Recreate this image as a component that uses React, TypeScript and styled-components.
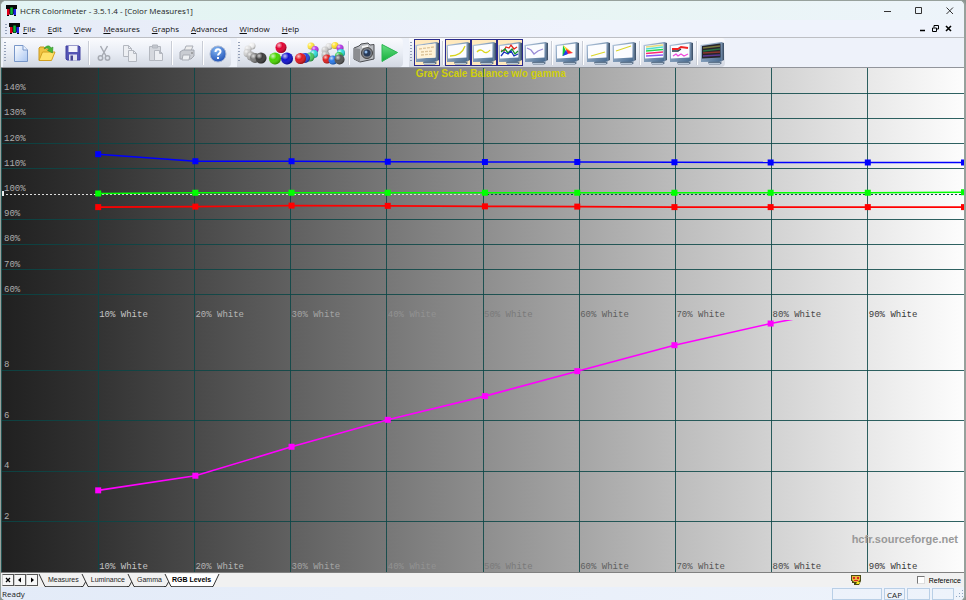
import React from "react";
import styled, { createGlobalStyle } from "styled-components";

const UI = `"Open Sans", "Noto Sans", sans-serif`;
const SANS = `"Liberation Sans", Arial, sans-serif`;
const MONO = `"Liberation Mono", "Courier New", monospace`;

const Global = createGlobalStyle`
  * { box-sizing: border-box; }
  body { margin: 0; background: #8b958f; }
  button { font: inherit; color: inherit; background: none; border: 0; padding: 0; }
`;

const Window = styled.div`
  height: 100vh;
  display: flex;
  flex-direction: column;
  font: 8px ${UI};
  color: #1c1c1c;
  background: #eff3fb;
  border: solid #97a19c;
  border-width: 1px 2px 0 1px;
  border-radius: 6px 6px 5px 5px;
  overflow: hidden;
`;
const TitleBar = styled.header`
  display: flex;
  align-items: center;
  justify-content: space-between;
  height: 19px;
  flex: none;
  padding: 0 9px 0 5px;
  background: linear-gradient(90deg, #e3f4f4, #e6f5f2 50%, #edf4fa);
`;
const Title = styled.h1`
  display: flex;
  align-items: center;
  gap: 3px;
  margin: 0;
  font: 8px ${UI};
  color: #222;
`;
const WindowButtons = styled.div<{ $gap: number }>`
  display: flex;
  gap: ${(p) => p.$gap}px;
  button { width: 10px; height: 12px; display: grid; place-items: center; }
`;
const MenuRow = styled.div`
  display: flex;
  align-items: center;
  height: 18px;
  flex: none;
  padding: 0 11px 0 3px;
  background: linear-gradient(90deg, #e6ebf7, #eff3fc 60%);
  border-bottom: 1px solid #bdbfc4;
`;
const Menu = styled.nav`
  display: flex;
  flex: 1;
  margin-left: 3px;
`;
const MenuItem = styled.button`
  padding: 0 7px 0 0;
  margin-right: 5px;
  line-height: 14px;
  color: #111;
`;
const Toolbars = styled.div`
  display: flex;
  gap: 6px;
  height: 30px;
  flex: none;
  padding-left: 2px;
  background: #eef2fa;
  border-bottom: 1px solid #92959b;
`;
const ToolGroup = styled.div`
  display: flex;
  align-items: center;
  background: linear-gradient(#fafbfe, #e9edf5 50%, #d3d8e2);
  border-radius: 0 4px 4px 0;
`;
const Grip = styled.span<{ $h: number }>`
  width: 2px;
  height: ${(p) => p.$h}px;
  margin: 0 2px 0 1px;
  background: repeating-linear-gradient(#94a0b8 0 1px, transparent 1px 3px);
`;
const Tool = styled.button`
  width: 26px;
  height: 27px;
  display: grid;
  place-items: center;
  border: 1px solid transparent;
  svg { width: 26px; height: 26px; margin: -1px; }
  &[aria-pressed="true"] { background: #ffe9bd; border-color: #29298c; }
`;
const Separator = styled.span`
  width: 1px;
  height: 24px;
  margin: 0 2px;
  background: #c9cdd6;
  box-shadow: 1px 0 #fff;
`;
const Charts = styled.main`
  flex: 1;
  min-height: 0;
  display: flex;
  flex-direction: column;
  border-left: 1px solid #245454;
  background: linear-gradient(90deg, #202020, #333 10%, #494949 20%, #606060 30%, #777 40%, #8e8e8e 50%, #a5a5a5 60%, #bcbcbc 70%, #d2d2d2 80%, #e8e8e8 90%, #fdfdfd);
`;
const Plot = styled.svg`
  display: block;
  width: 100%;
  flex: 1 1 0;
  min-height: 0;
  overflow: hidden;
`;
const Label = styled.text`
  font: 9px ${MONO};
`;
const Heading = styled.text`
  font: bold 10px ${SANS};
  fill: #cfcf0c;
`;
const Site = styled.text`
  font: bold 11px ${SANS};
  fill: #999;
`;
const SheetRow = styled.div`
  display: flex;
  align-items: center;
  height: 15px;
  flex: none;
  padding-left: 1px;
  background: #f1f1f1;
  border-top: 1px solid #808080;
  font: 7px ${SANS};
`;
const SheetNav = styled.button`
  width: 12px;
  height: 12px;
  display: grid;
  place-items: center;
  background: #f7f7f7;
  border: 1px solid #555;
  border-left-color: #ccc;
`;
const Tabs = styled.div`
  display: flex;
  flex: 1;
  height: 13px;
`;
const Edge = styled.svg`
  width: 8px;
  height: 13px;
  flex: none;
`;
const Tab = styled.button`
  padding: 0 2px;
  line-height: 12px;
  border-bottom: 1px solid #555;
  font: 7px ${SANS};
  &[aria-selected="true"] { background: #fff; font-weight: bold; padding: 0 1px 0 0; color: #000; }
`;
const RobotButton = styled.button`
  width: 12px;
  height: 12px;
  margin-right: 55px;
`;
const Reference = styled.label`
  display: flex;
  align-items: center;
  gap: 4px;
  margin-right: 3px;
  color: #000;
  input {
    appearance: none;
    width: 8px;
    height: 8px;
    margin: 0;
    background: #fff;
    border: 1px solid;
    border-color: #777 #ddd #ddd #777;
  }
`;
const StatusBar = styled.footer`
  display: flex;
  align-items: center;
  gap: 2px;
  height: 13px;
  flex: none;
  background: linear-gradient(90deg, #e3ebf8, #eef3fb);
  padding: 0 1px;
`;
const Ready = styled.span`
  flex: 1;
`;
const Pane = styled.span<{ $w: number }>`
  width: ${(p) => p.$w}px;
  height: 12px;
  line-height: 11px;
  text-align: center;
  border: 1px solid #b9cfe6;
`;

const Logo = () => (
  <svg width="11" height="11" viewBox="0 0 11 11" aria-hidden="true">
    <path d="M0 0H11V4H10V11H8V9H7V10H4V9H3V11H1V4H0Z" fill="#080808" />
    <rect x="1" y="4" width="2.500" height="6" fill="#e00018" />
    <rect x="4.300" y="2.500" width="2.500" height="7" fill="#08b838" />
    <rect x="7.500" y="4" width="2.500" height="6" fill="#2020e0" />
  </svg>
);

const Defs = () => (
  <svg width="0" height="0" aria-hidden="true">
    <defs>
      <linearGradient id="page" x1="0" y1="0" x2="1" y2="1"><stop stopColor="#fff" /><stop offset="1" stopColor="#a9c6f2" /></linearGradient>
      <linearGradient id="bezel" x1="0" y1="0" x2="1" y2="1"><stop stopColor="#b9cbe0" /><stop offset="1" stopColor="#46698f" /></linearGradient>
      <linearGradient id="side" x1="0" y1="0" x2="1" y2="0"><stop stopColor="#8299b4" /><stop offset="1" stopColor="#33475f" /></linearGradient>
      <radialGradient id="help" cx=".4" cy=".25" r=".8"><stop stopColor="#84b8f4" /><stop offset="1" stopColor="#1d4eb4" /></radialGradient>
      <linearGradient id="play" x1="0" y1="0" x2="0" y2="1"><stop stopColor="#66df83" /><stop offset="1" stopColor="#13ad3a" /></linearGradient>
      <radialGradient id="shine" cx=".33" cy=".3" r=".7"><stop stopColor="#fff" stopOpacity=".75" /><stop offset=".45" stopColor="#fff" stopOpacity="0" /><stop offset="1" stopColor="#000" stopOpacity=".3" /></radialGradient>
    </defs>
  </svg>
);

const I = ({ children }: { children: React.ReactNode }) => (
  <svg viewBox="0 0 26 26" aria-hidden="true">{children}</svg>
);
type BallSpec = [number, number, number, string];
const Balls = ({ items }: { items: BallSpec[] }) => (
  <I>
    {items.map(([x, y, r, c], i) => (
      <g key={i}><circle cx={x} cy={y} r={r} fill={c} /><circle cx={x} cy={y} r={r} fill="url(#shine)" /></g>
    ))}
  </I>
);
const Monitor = ({ children, dark }: { children: React.ReactNode; dark?: boolean }) => (
  <I>
    <path d="M9 22L12 20H19L23 23L21 24.500H10Z" fill="#60758c" />
    <path d="M10 23.500H21" stroke="#b7c7d8" />
    <path d="M22 2L25 3V20L22 21.500Z" fill="url(#side)" />
    <path d="M1.500 5L22.500 2V21.500L2 22Z" fill="url(#bezel)" />
    <path d="M3 6L21.500 3.500V17.500L3 18.500Z" fill={dark ? "#26242b" : "#fbfcff"} />
    <g fill="none" strokeWidth="1.300">{children}</g>
  </I>
);
const Sheet = ({ x, y, w = 9, h = 12, c }: { x: number; y: number; w?: number; h?: number; c: string }) => (
  <path d={`M${x} ${y}h${w - 3}l3 3v${h - 3}h-${w}Z M${x + w - 3} ${y}v3h3`} fill="#edeff3" stroke={c} />
);
const G = "#b4b8c0";

const icons: Record<string, React.ReactNode> = {
  New: <I><path d="M6.500 5.500H15L19.500 10V21.500H6.500Z" fill="url(#page)" stroke="#7897c9" /><path d="M15 5.500V10H19.500" fill="#e9f1ff" stroke="#7897c9" /></I>,
  Open: <I><path d="M5 20V8L6 7H10L12 9H18V12" fill="#f0c341" stroke="#c99820" /><path d="M5 20.500L8.500 12H21L17.500 20.500Z" fill="#ffe16a" stroke="#d2a020" /><path d="M10 9C12 5 16 5 17 8L19 7L18.500 13L13.500 10.500L15 9.500C14 7.500 12 7.500 10 9Z" fill="#4bb838" stroke="#2c8a2a" strokeWidth=".5" /></I>,
  Save: <I><path d="M6 6H19L20 7V20H7L6 19Z" fill="#5454b4" stroke="#4040a0" /><path d="M8.500 6H17.500V12H8.500Z" fill="#f4f5fb" /><path d="M9 14.500H17V20.500H9Z" fill="#e2e4f0" /><path d="M10.500 15.500H13V20.500H10.500Z" fill="#454594" /></I>,
  Cut: <I><g fill="none" stroke="#a7abb3" strokeWidth="1.500"><path d="M9.500 6L15 16M16.500 6L11 16" /><circle cx="9.500" cy="18" r="2.200" /><circle cx="16.500" cy="18" r="2.200" /></g></I>,
  Copy: <I><Sheet x={6.5} y={5.5} w={8} h={11} c={G} /><Sheet x={11.5} y={10.5} w={8} h={11} c={G} /></I>,
  Paste: <I><path d="M6.500 6.500H17.500V20.500H6.500Z" fill="#d5d8de" stroke={G} /><path d="M9.500 5H14.500V8H9.500Z" fill="#c2c6cd" stroke={G} /><Sheet x={11.5} y={10.5} w={8} h={10} c={G} /></I>,
  Print: <I><path d="M10 11L12 6H19L17 11Z" fill="#eee" stroke="#aaaeb6" /><path d="M6 12L9 10H20V16L17 19H6Z" fill="#c9ccd2" stroke="#a2a6af" /><path d="M9 15H16L15 20H8Z" fill="#eef0f3" stroke="#a9adb5" /><path d="M17 13H19" stroke="#777" /></I>,
  Help: <I><circle cx="13" cy="14" r="8" fill="url(#help)" stroke="#aab8d2" /><path d="M10.500 12C10.500 8.500 15.500 8.500 15.500 11.500C15.500 13.500 13 13.200 13 15.500M13 17V19" fill="none" stroke="#fff" strokeWidth="2" /></I>,
  "Gray scale": <Balls items={[[10, 6, 3.5, "#f0f0f0"], [6, 9, 3.5, "#e0e0e0"], [5.500, 13, 4, "#d0d0d0"], [9, 16, 4.5, "#b0b0b0"], [13, 18, 5, "#7c7c7c"], [19, 18, 5.5, "#3c3c3c"]]} />,
  Primaries: <Balls items={[[13, 7.5, 5.5, "#e00030"], [7, 18.5, 6, "#48d400"], [19, 18.5, 6, "#1010cc"]]} />,
  "Saturation scale": <Balls items={[[17, 6, 3.5, "#ffe640"], [21, 9.5, 3.5, "#b838ec"], [20, 14, 4, "#30d8d8"], [16, 17, 4.5, "#48c860"], [11, 18, 5, "#2448e0"], [6.5, 18.5, 5.5, "#df1720"]]} />,
  "All colours": <Balls items={[[9, 6.5, 3.500, "#ddd"], [15, 5.5, 3.500, "#ffe030"], [20, 8, 3.500, "#b43ae6"], [21, 13, 4, "#2edada"], [5, 10, 3.500, "#ccc"], [5.5, 15, 4, "#bbb"], [19, 16, 4, "#30c850"], [7, 19, 4.5, "#df2020"], [13, 20, 4.5, "#2878e8"], [19.5, 19.5, 5, "#555"]]} />,
  Capture: <I><path d="M3 8L8 6L10 4L17 3L19 5L23 4.500V19L9 22L3 19Z" fill="#b8bbc0" stroke="#4c4e52" /><path d="M3 8L9 9V22L3 19Z" fill="#8b8d91" /><circle cx="16" cy="13" r="5.500" fill="#7d8087" stroke="#444" /><circle cx="16" cy="13" r="3.500" fill="#273a58" /><circle cx="15" cy="12" r="1.500" fill="#8fb8e8" /><path d="M11 6L17 5V7L11 8Z" fill="#f5f5f5" /></I>,
  Run: <I><path d="M5 4.500L20.500 12.500L5 21.500Z" fill="url(#play)" stroke="#2cb652" /></I>,
  Measures: <Monitor><path d="M3 6L21.500 3.500V17.500L3 18.500Z" fill="#fff3d8" /><path d="M5 9L20 7M7 12L19 11M7 15L19 14" stroke="#dec59b" strokeDasharray="3 1" /></Monitor>,
  Luminance: <Monitor><path d="M5 16C13 16 18 12 20 6" stroke="#d8d51c" /></Monitor>,
  Gamma: <Monitor><path d="M6 12C9 8 12 11 13 12S17 13 19 10" stroke="#dcd71c" /></Monitor>,
  "RGB levels": <Monitor><path d="M4 10L7 11L9 7L12 8L14 5L17 9L20 7" stroke="#e4281c" /><path d="M4 12L8 9L11 13L15 9L18 14L21 11" stroke="#12952c" /><path d="M4 16L7 12L11 14L14 11L17 16L21 14" stroke="#1732bd" /></Monitor>,
  "Near black": <Monitor><path d="M4 8L8 10L11 14L15 11L20 9" stroke="#9a8cd6" /></Monitor>,
  "CIE diagram": <Monitor><path d="M9 5L8.500 16L13 14L11 9Z" fill="#11c83a" /><path d="M9 5L19 13L12 10Z" fill="#ffd51c" /><path d="M12 9L19 13L13 14Z" fill="#ff2432" /><path d="M8.500 16L12 10L14 14Z" fill="#2638ef" /></Monitor>,
  "Low luminance": <Monitor><path d="M6 16L20 12" stroke="#dbd62a" /></Monitor>,
  "High luminance": <Monitor><path d="M5 11L20 6" stroke="#dbd62a" /></Monitor>,
  "Saturation luminance": <Monitor><path d="M4 7L21 5" stroke="#e8dc7c" /><path d="M4 9L21 7" stroke="#50dfd2" /><path d="M4 11L21 9.500" stroke="#27d949" /><path d="M4 13.500L21 12" stroke="#ff2970" /><path d="M4 16L21 15" stroke="#8c58f3" /></Monitor>,
  "Saturation shift": <Monitor><path d="M4 9L10 9L13 7L20 8" stroke="#f12424" strokeWidth="2" /><path d="M4 11H10L13 9" stroke="#203a45" /><path d="M5 16L8 14L10 16L13 14L16 16L20 14" stroke="#f048dc" /></Monitor>,
  "Free measures": <Monitor dark><path d="M4 8L21 6" stroke="#77773c" /><path d="M4 11L21 9" stroke="#247344" /><path d="M4 13L21 12" stroke="#8c352b" /><path d="M4 16L21 15" stroke="#5b3b95" /></Monitor>,
};

const groups: { grip: string; items: string[] }[] = [
  { grip: "File", items: ["New", "Open", "Save", "|", "Cut", "Copy", "Paste", "|", "Print", "|", "Help"] },
  { grip: "Measure", items: ["Gray scale", "Primaries", "Saturation scale", "All colours", "|", "Capture", "Run"] },
  { grip: "View", items: ["Measures", "|", "Luminance", "Gamma", "RGB levels", "Near black", "|", "CIE diagram", "|", "Low luminance", "High luminance", "|", "Saturation luminance", "Saturation shift", "|", "Free measures"] },
];
const pressed = ["Measures", "Luminance", "Gamma", "RGB levels"];
const disabled = ["Cut", "Copy", "Paste", "Print"];
const menus = ["File", "Edit", "View", "Measures", "Graphs", "Advanced", "Window", "Help"];
const tabs = ["Measures", "Luminance", "Gamma", "RGB Levels"];

const steps = [10, 20, 30, 40, 50, 60, 70, 80, 90];
const labelColors = ["#c4c4c4", "#b4b4b4", "#a4a4a4", "#929292", "#7a7a7a", "#606060", "#585858", "#484848", "#383838"];
const levels = [10, 20.1, 30.1, 40.1, 50.2, 59.8, 69.9, 79.9, 90, 100];

const series = [
  { color: "#0000ff", values: [115.8, 113, 113, 112.8, 112.7, 112.7, 112.6, 112.5, 112.5, 112.5] },
  { color: "#ff0000", values: [94.8, 95, 95.4, 95.3, 95.1, 95, 94.8, 94.8, 94.8, 94.8] },
  { color: "#00ff00", values: [100.2, 100.5, 100.5, 100.5, 100.5, 100.5, 100.5, 100.5, 100.5, 100.7] },
];
const gamma = [3.24, 3.82, 4.97, 6.04, 6.98, 7.97, 9, 9.86, 10.6, 11.3];

const Series = ({ color, values, min, max }: { color: string; values: number[]; min: number; max: number }) => {
  const y = (v: number) => `${((max - v) / (max - min)) * 100}%`;
  return (
    <g>
      {values.slice(1).map((v, i) => (
        <line key={i} x1={`${levels[i]}%`} y1={y(values[i])} x2={`${levels[i + 1]}%`} y2={y(v)} stroke={color} strokeWidth="1.600" />
      ))}
      {values.map((v, i) => (
        <rect key={i} x={`${levels[i]}%`} y={y(v)} width="6" height="6" transform="translate(-3 -3)" fill={color} />
      ))}
    </g>
  );
};

const Grid = ({ rows, min, max, unit }: { rows: number[]; min: number; max: number; unit: string }) => (
  <g>
    {rows.map((r) => {
      const y = `${((max - r) / (max - min)) * 100}%`;
      return (
        <g key={r}>
          {r !== 100 && <line x1="0" x2="100%" y1={y} y2={y} stroke="#0b4747" strokeOpacity=".85" shapeRendering="crispEdges" />}
          <Label x="2" y={y} dy="-3" fill="#acacac">{r}{unit}</Label>
        </g>
      );
    })}
    {steps.map((s, i) => (
      <g key={s}>
        <line x1={`${s}%`} x2={`${s}%`} y1="0" y2="100%" stroke="#0b4747" strokeOpacity=".85" shapeRendering="crispEdges" />
        <Label x={`${s}%`} y="100%" dx="1" dy="-3" fill={labelColors[i]}>{s}% White</Label>
      </g>
    ))}
  </g>
);

export default function App() {
  return (
    <>
      <Global />
      <Window>
        <TitleBar>
          <Title><Logo />HCFR Colorimeter - 3.5.1.4 - [Color Measures1]</Title>
          <WindowButtons $gap={21}>
            <button aria-label="Minimize"><svg width="8" height="8"><path d="M0 4.500H7" stroke="#333" /></svg></button>
            <button aria-label="Maximize"><svg width="8" height="8"><path d="M.5.5H6.500V6.500H.5Z" fill="none" stroke="#333" /></svg></button>
            <button aria-label="Close"><svg width="8" height="8"><path d="M.5.5L7 7M7 .5L.5 7" stroke="#333" /></svg></button>
          </WindowButtons>
        </TitleBar>
        <MenuRow>
          <Grip $h={10} />
          <Logo />
          <Menu>
            {menus.map((m) => <MenuItem key={m}><u>{m[0]}</u>{m.slice(1)}</MenuItem>)}
          </Menu>
          <WindowButtons $gap={3}>
            <button aria-label="Minimize document"><svg width="7" height="7"><path d="M1 5.500H6" stroke="#000" strokeWidth="1.500" /></svg></button>
            <button aria-label="Restore document"><svg width="7" height="7"><path d="M2 2.500V.5H6.500V4H5M.5 3H4.500V6.500H.5Z" fill="none" stroke="#000" /></svg></button>
            <button aria-label="Close document"><svg width="7" height="7"><path d="M1 1L6 6M6 1L1 6" stroke="#000" strokeWidth="1.600" /></svg></button>
          </WindowButtons>
        </MenuRow>
        <Toolbars>
          {groups.map((g) => (
            <ToolGroup key={g.grip} role="toolbar" aria-label={g.grip}>
              <Grip $h={21} />
              {g.items.map((t, i) =>
                t === "|" ? <Separator key={i} /> : (
                  <Tool key={t} aria-label={t} disabled={disabled.includes(t)} aria-pressed={g.grip === "View" ? pressed.includes(t) : undefined}>
                    {icons[t]}
                  </Tool>
                )
              )}
            </ToolGroup>
          ))}
          <Defs />
        </Toolbars>
        <Charts>
          <Plot role="img" aria-label="RGB levels">
            <Grid rows={[140, 130, 120, 110, 100, 90, 80, 70, 60]} min={50} max={150} unit="%" />
            <line x1="0" x2="50%" y1="50%" y2="50%" stroke="#ddd" strokeDasharray="2 2" shapeRendering="crispEdges" />
            <line x1="50%" x2="100%" y1="50%" y2="50%" stroke="#0b4747" strokeDasharray="2 2" shapeRendering="crispEdges" />
            <rect x="0" y="50%" width="2" height="5" transform="translate(0 -3)" fill="#eee" />
            <Heading x="50.800%" y="9" textAnchor="middle">Gray Scale Balance w/o gamma</Heading>
            {series.map((s) => <Series key={s.color} {...s} min={50} max={150} />)}
          </Plot>
          <Plot role="img" aria-label="Gray scale gamma">
            <Grid rows={[8, 6, 4, 2]} min={0} max={10} unit="" />
            <Site x="100%" y="100%" dx="-6" dy="-29" textAnchor="end">hcfr.sourceforge.net</Site>
            <Series color="#ff00ff" values={gamma} min={0} max={10} />
          </Plot>
        </Charts>
        <SheetRow>
          <SheetNav aria-label="Close view"><svg width="6" height="6"><path d="M1 1L5 5M5 1L1 5" stroke="#000" strokeWidth="1.300" /></svg></SheetNav>
          <SheetNav aria-label="Previous view"><svg width="6" height="6"><path d="M4 .5V5.500L1 3Z" /></svg></SheetNav>
          <SheetNav aria-label="Next view"><svg width="6" height="6"><path d="M2 .5V5.500L5 3Z" /></svg></SheetNav>
          <Tabs role="tablist">
            {tabs.map((t, i) => {
              const on = t === "RGB Levels";
              return (
                <React.Fragment key={t}>
                  <Edge aria-hidden="true">
                    {on && <path d="M1 0H8V13H7Z" fill="#fff" />}
                    <path d={i ? "M1 0L7 12.500H8M4.500 8L2 12.500H0" : "M1 0L7 12.500H8"} fill="none" stroke="#333" />
                  </Edge>
                  <Tab role="tab" aria-selected={on}>{t}</Tab>
                </React.Fragment>
              );
            })}
            <Edge aria-hidden="true"><path d="M0 0H7L1 12.500H0Z" fill="#fff" /><path d="M7 0L1 12.500H0" fill="none" stroke="#333" /></Edge>
          </Tabs>
          <RobotButton aria-label="Assistant">
            <svg width="12" height="12" viewBox="0 0 12 12"><path d="M1 1H11V7L9 11H4V9H2V7H1Z" fill="#4a4a12" /><path d="M2 2H10V6L8 8H4L2 6Z" fill="#e4b93a" /><path d="M3 3H5V5H3ZM7 3H9V5H7ZM4 6H8V7H4Z" fill="#dd2424" /><path d="M7 8H10L9 10H6Z" fill="#f4ec20" /></svg>
          </RobotButton>
          <Reference><input type="checkbox" />Reference</Reference>
        </SheetRow>
        <StatusBar>
          <Ready>Ready</Ready>
          <Pane $w={50} />
          <Pane $w={21}>CAP</Pane>
          <Pane $w={23} />
          <Pane $w={22} />
          <svg width="7" height="10" aria-hidden="true"><path d="M6 1h1v1h-1zM3 4h1v1h-1zM6 4h1v1h-1zM0 7h1v1h-1zM3 7h1v1h-1zM6 7h1v1h-1z" fill="#8fa6c2" /></svg>
        </StatusBar>
      </Window>
    </>
  );
}
